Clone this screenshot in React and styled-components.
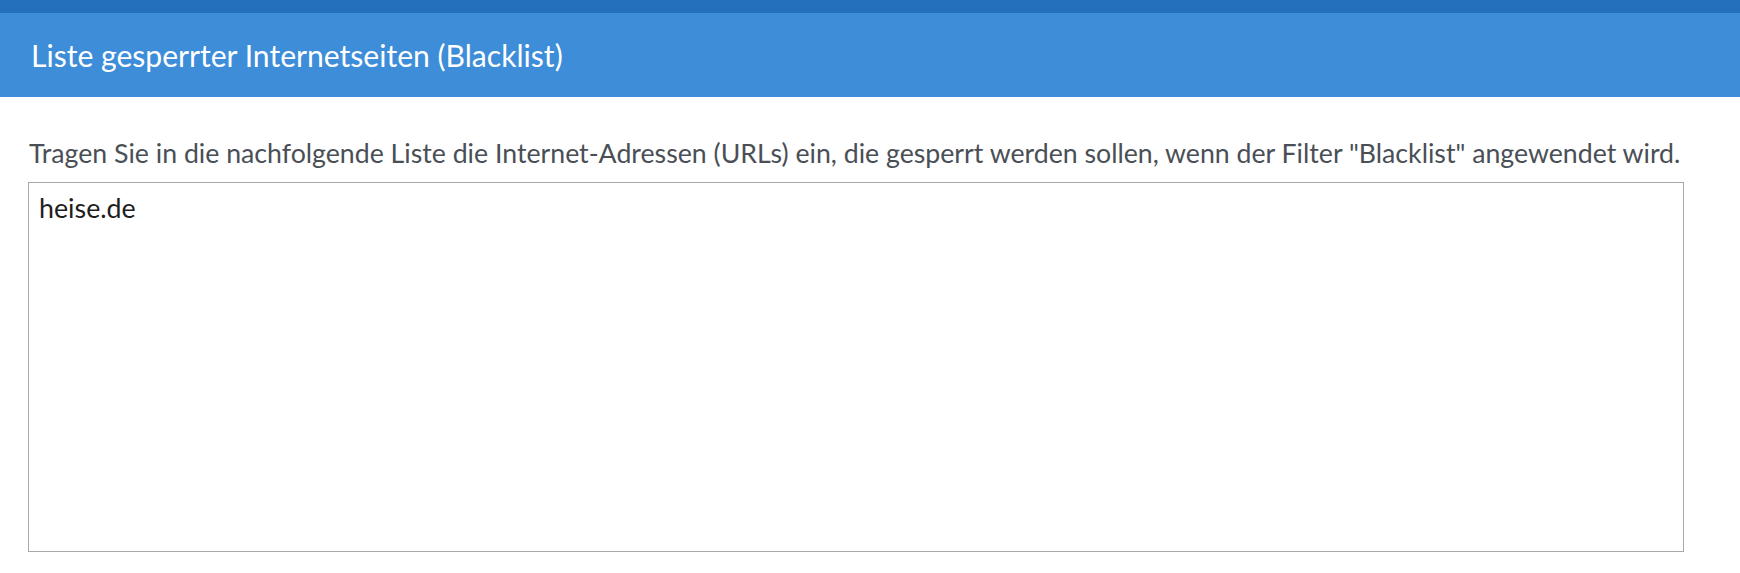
import React from "react";
import styled, { createGlobalStyle } from "styled-components";

const Global = createGlobalStyle`
  html, body { margin: 0; padding: 0; background: #ffffff; }
  body { font-family: Lato, "Open Sans", sans-serif; }
`;

const TopStrip = styled.div`
  height: 13px;
  background: #2470bd;
`;

const Header = styled.header`
  height: 84px;
  background: #3d8dd9;
  display: flex;
  align-items: center;
  padding-left: 31px;
`;

const Title = styled.h1`
  margin: 0;
  font-family: Lato, "Open Sans", sans-serif;
  font-weight: 400;
  font-size: 30.1px;
  line-height: 36px;
  color: #ffffff;
`;

const Content = styled.main`
  padding: 38px 56px 0 28px;
`;

const Description = styled.p`
  margin: 0 0 11px 1px;
  font-size: 26.7px;
  line-height: 36px;
  color: #4a4f56;
  white-space: nowrap;
`;

const ListField = styled.textarea`
  display: block;
  box-sizing: border-box;
  width: 1656px;
  height: 370px;
  margin: 0;
  padding: 7px 10px;
  border: 1px solid #a9a9a9;
  border-radius: 0;
  font-family: Lato, "Open Sans", sans-serif;
  font-size: 26.8px;
  line-height: 36px;
  color: #1e1e1e;
  resize: none;
  outline: none;
  background: #ffffff;
`;

export default function App() {
  return (
    <>
      <Global />
      <TopStrip />
      <Header>
        <Title>Liste gesperrter Internetseiten (Blacklist)</Title>
      </Header>
      <Content>
        <Description>
          Tragen Sie in die nachfolgende Liste die Internet-Adressen (URLs) ein, die gesperrt werden sollen, wenn der Filter "Blacklist" angewendet wird.
        </Description>
        <ListField defaultValue="heise.de" spellCheck={false} />
      </Content>
    </>
  );
}
